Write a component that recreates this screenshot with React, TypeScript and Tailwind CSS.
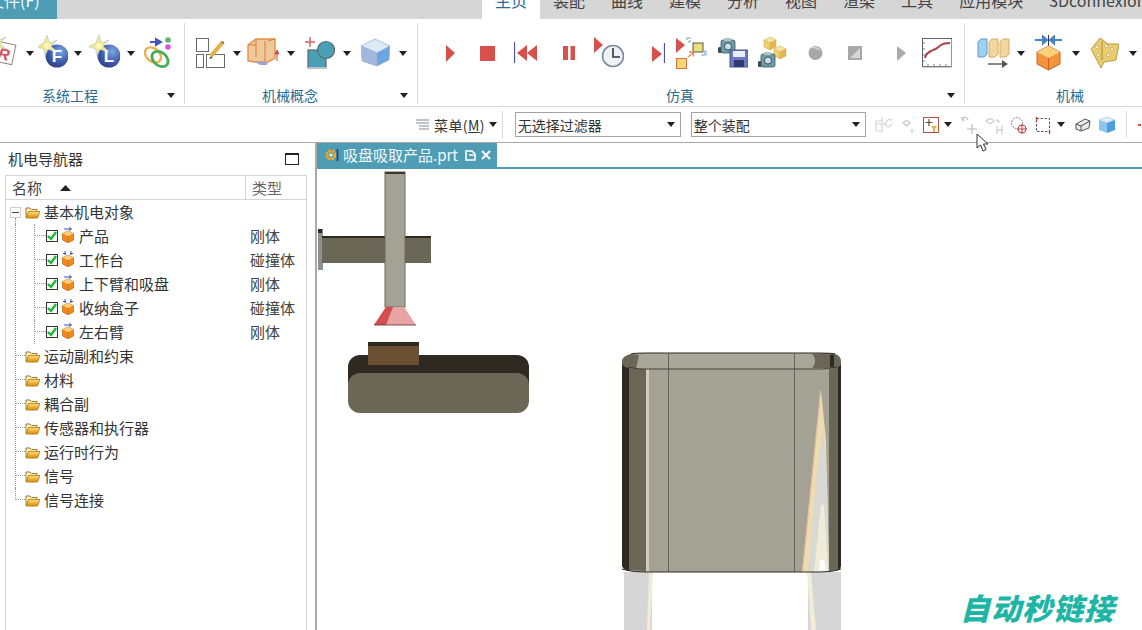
import React from 'react';

const FONT = "font-['Noto_Sans_CJK_SC','Noto_Sans',sans-serif]";

const Ico: React.FC<{ w: number; h?: number; className?: string; children: React.ReactNode }> = ({ w, h = 36, className = '', children }) => (
  <svg width={w} height={h} viewBox={`0 0 ${w} ${h}`} className={`shrink-0 ${className}`}>
    {children}
  </svg>
);

const Caret: React.FC<{ className?: string }> = ({ className = '' }) => (
  <svg width={8} height={5} viewBox="0 0 8 5" className={`shrink-0 ${className}`}>
    <path d="M0 0h8L4 5z" fill="#222" />
  </svg>
);

const Sun = ({ x, y }: { x: number; y: number }) => (
  <g transform={`translate(${x} ${y})`}>
    <path d="M0-11 2.500-3 10-6 4 0 10 6 1 3.500-2 10-3.500 2.500-12 1-3.500-2.500z" fill="#f3e78a" stroke="#9fc7e6" strokeWidth="0.6" />
    <circle r="3" fill="#fff6b0" />
  </g>
);

const Globe = ({ id, letter, cx }: { id: string; letter: string; cx: number }) => (
  <>
    <defs>
      <radialGradient id={id} cx="0.65" cy="0.3" r="0.8">
        <stop offset="0" stopColor="#7aa7e4" />
        <stop offset="0.6" stopColor="#4058a8" />
        <stop offset="1" stopColor="#2f3c86" />
      </radialGradient>
    </defs>
    <circle cx={cx} cy="21" r="11.5" fill={`url(#${id})`} />
    <Sun x={cx - 10} y={11} />
    <text x={cx} y="27" textAnchor="middle" fontSize="17" fontWeight="700" fill="#fff" fontFamily="'Liberation Sans',sans-serif">
      {letter}
    </text>
  </>
);

const Camera = ({ x, y }: { x: number; y: number }) => (
  <g transform={`translate(${x} ${y})`}>
    <rect x="0" y="9" width="4" height="6" rx="1.5" fill="#3c4a4a" />
    <rect x="3" y="2" width="14" height="13" rx="2" fill="#6f9aa6" stroke="#40585f" strokeWidth="0.8" />
    <rect x="6" y="0" width="7" height="3" fill="#a9c4cc" />
    <circle cx="10" cy="8.5" r="3.6" fill="#c9dde4" stroke="#34505a" strokeWidth="1" />
  </g>
);

const MiniCube = ({ x, y, s = 1 }: { x: number; y: number; s?: number }) => (
  <g transform={`translate(${x} ${y}) scale(${s})`}>
    <path d="M0 3 6 0l6 3-6 3z" fill="#f7e3a0" stroke="#d9b456" strokeWidth="0.6" />
    <path d="M0 3l6 3v7l-6-3z" fill="#efcf72" stroke="#d9b456" strokeWidth="0.6" />
    <path d="M12 3 6 6v7l6-3z" fill="#e2b74f" stroke="#d9b456" strokeWidth="0.6" />
  </g>
);

const Folder = () => (
  <svg width={15} height={13} viewBox="0 0 15 13" className="shrink-0">
    <defs>
      <linearGradient id="fold" x1="0" y1="0" x2="0" y2="1">
        <stop offset="0" stopColor="#ffe27a" />
        <stop offset="1" stopColor="#e08a00" />
      </linearGradient>
    </defs>
    <path d="M1 11V2h4l1.500 1.500H12V5" fill="#fdf3cf" stroke="#a9741c" strokeWidth="1" />
    <path d="M1 12 3.500 5.500H15L12.500 12z" fill="url(#fold)" stroke="#a9741c" strokeWidth="0.8" />
  </svg>
);

const Check = () => (
  <svg width={12} height={12} viewBox="0 0 12 12" className="shrink-0">
    <rect x="0.500" y="0.500" width="11" height="11" fill="#fff" stroke="#2c3a2c" />
    <path d="M2 6l3 3 5-7" fill="none" stroke="#1fb53c" strokeWidth="2.400" />
  </svg>
);

const BodyCube = ({ fixed }: { fixed?: boolean }) => (
  <svg width={12} height={16} viewBox="0 0 12 16" className="shrink-0">
    {fixed ? (
      <path d="M3 0v4M9 0v4M1 2.500h3M8 2.500h3" stroke="#3d55b5" strokeWidth="1" />
    ) : (
      <path d="M2 2h7M7 0.500 9.500 2 7 3.500" stroke="#3d55b5" strokeWidth="1" fill="none" />
    )}
    <path d="M6 4l5.500 2.500v6.500L6 16 .5 13V6.500z" fill="#f08a1c" stroke="#b9540f" strokeWidth="0.6" />
    <path d="M6 4l5.500 2.500L6 9 .5 6.500z" fill="#fbd27a" />
    <path d="M6 9v7" stroke="#c8680f" strokeWidth="0.6" />
  </svg>
);

const children = [
  { name: '产品', type: '刚体', fixed: false },
  { name: '工作台', type: '碰撞体', fixed: true },
  { name: '上下臂和吸盘', type: '刚体', fixed: false },
  { name: '收纳盒子', type: '碰撞体', fixed: true },
  { name: '左右臂', type: '刚体', fixed: false },
];
const roots = ['运动副和约束', '材料', '耦合副', '传感器和执行器', '运行时行为', '信号'];
const tabs = ['装配', '曲线', '建模', '分析', '视图', '渲染', '工具', '应用模块'];

const GroupLabel: React.FC<{ label: string; arrow?: boolean }> = ({ label, arrow = true }) => (
  <div className="flex items-center h-[16px] mt-[16px]">
    <div className="flex-1 text-center text-[14px] leading-[16px] text-[#2a6c93]">{label}</div>
    {arrow && (
      <div className="w-[22px] pl-[5px] flex items-center">
        <Caret />
      </div>
    )}
  </div>
);

const Ribbon = () => (
  <div className="flex h-[88px] border-b border-[#d9d9d9] bg-white pt-[4px] overflow-hidden">
    {/* 系统工程 */}
    <div className="shrink-0 w-[207px] -ml-[22px] h-[81px] border-r border-[#dcdcdc] pt-[12px]">
      <div className="flex items-center h-[36px]">
        <Ico w={26} className="ml-[14px]">
          <g transform="rotate(12 13 18)">
            <rect x="2" y="8" width="20" height="20" fill="#fff" stroke="#8a8a7a" />
            <text x="12" y="25" textAnchor="middle" fontSize="16" fontStyle="italic" fontWeight="700" fill="#d8505a" fontFamily="'Liberation Sans',sans-serif">R</text>
          </g>
          <Sun x={4} y={8} />
        </Ico>
        <Caret className="ml-[8px]" />
        <Ico w={30} className="ml-[4px]"><Globe id="gf" letter="F" cx={19} /></Ico>
        <Caret className="ml-[6px]" />
        <Ico w={31} className="ml-[7px]"><Globe id="gl" letter="L" cx={20} /></Ico>
        <Caret className="ml-[7px]" />
        <Ico w={30} className="ml-[7px]">
          <path d="M8 7h9M14 4l5 3-5 3z" fill="#4a55c4" stroke="#4a55c4" strokeWidth="2" />
          <circle cx="26" cy="5" r="2.800" fill="#5fb56a" />
          <circle cx="26" cy="12" r="2.800" fill="#dc50dc" />
          <ellipse cx="11" cy="20" rx="9" ry="6.500" transform="rotate(40 11 20)" fill="none" stroke="#eeb04c" strokeWidth="2.400" />
          <ellipse cx="18" cy="24" rx="9" ry="6.500" transform="rotate(40 18 24)" fill="none" stroke="#45ad5a" strokeWidth="2.800" />
        </Ico>
      </div>
      <GroupLabel label="系统工程" />
    </div>

    {/* 机械概念 */}
    <div className="shrink-0 w-[233px] h-[81px] border-r border-[#dcdcdc] pt-[12px]">
      <div className="flex items-center h-[36px]">
        <Ico w={29} className="ml-[11px]">
          <g fill="#fff" stroke="#6a6a6a" strokeWidth="1">
            <rect x="0.500" y="3.500" width="12" height="13" />
            <rect x="0.500" y="19.500" width="7" height="13" />
            <rect x="10.500" y="19.500" width="18" height="13" />
          </g>
          <path d="M26 8 15 21" stroke="#e5b040" strokeWidth="4" />
          <path d="M26 8l-1.500-1.500 3 0 1 3z" fill="#8a5a3a" />
          <path d="M15 21l-2 3 3.500-1z" fill="#444" />
        </Ico>
        <Caret className="ml-[8px]" />
        <Ico w={32} className="ml-[6px]">
          <path d="M1 10 9 4h19v19l-7 4H8L1 26z" fill="#ecc99a" stroke="#e88f45" strokeWidth="1.400" />
          <path d="M9 4v18M18 6v20M1 10l8 0M21 6l7-2" stroke="#e07b3c" strokeWidth="1" fill="none" />
          <path d="M8 27l5 3h7l1-3z" fill="#9aa6dc" />
          <path d="M30 26v-8M28 19l2-4 2 4z" stroke="#d9464a" fill="#d9464a" strokeWidth="1" />
        </Ico>
        <Caret className="ml-[8px]" />
        <Ico w={30} className="ml-[10px]">
          <path d="M0 7h10M5 2v10" stroke="#d9606a" strokeWidth="1.400" />
          <rect x="3" y="15" width="18" height="18" fill="#4a9fb6" stroke="#5a6a6a" strokeWidth="1.200" />
          <circle cx="21" cy="15" r="8.500" fill="#4a9fb6" stroke="#5a6a6a" strokeWidth="1.200" />
          <path d="M3 33h19" stroke="#b8c4c4" strokeWidth="2" />
        </Ico>
        <Caret className="ml-[8px]" />
        <Ico w={29} className="ml-[10px]">
          <path d="M0 11 14 4l15 7-13 7z" fill="#dcebf8" stroke="#9ab4d8" strokeWidth="0.800" />
          <path d="M0 11l16 7v13L1 26z" fill="#a3b7dc" stroke="#9ab4d8" strokeWidth="0.800" />
          <path d="M29 11 16 18v13l12-6z" fill="#6ea4e0" stroke="#9ab4d8" strokeWidth="0.800" />
        </Ico>
        <Caret className="ml-[9px]" />
      </div>
      <GroupLabel label="机械概念" />
    </div>

    {/* 仿真 */}
    <div className="shrink-0 w-[547px] h-[81px] border-r border-[#dcdcdc] pt-[12px]">
      <div className="flex items-center h-[36px]">
        <Ico w={9} className="ml-[28px]"><path d="M0 10l9 8-9 9z" fill="#d8504c" /></Ico>
        <Ico w={15} className="ml-[25px]"><rect y="11" width="15" height="15" fill="#d8504c" /></Ico>
        <Ico w={23} className="ml-[19px]">
          <path d="M.5 7v21" stroke="#4a55a8" strokeWidth="1.200" />
          <path d="M13 10v16L3 18zM23 10v16L13 18z" fill="#d8504c" />
        </Ico>
        <Ico w={12} className="ml-[26px]">
          <rect y="11" width="5" height="14" fill="#d8504c" />
          <rect x="7.500" y="11" width="4.500" height="14" fill="#d8504c" />
        </Ico>
        <Ico w={30} className="ml-[19px]">
          <path d="M0 2l9 8-9 8z" fill="#d8504c" />
          <circle cx="19" cy="21" r="10.500" fill="#eef2f6" stroke="#7a8aa6" strokeWidth="1.600" />
          <path d="M19 13v9h7" fill="none" stroke="#333" strokeWidth="1.600" />
        </Ico>
        <Ico w={13} className="ml-[28px]">
          <path d="M0 11l10 8-10 8z" fill="#d8504c" />
          <path d="M12.500 8v20" stroke="#4a55a8" strokeWidth="1.200" />
        </Ico>
        <Ico w={31} className="ml-[11px]">
          <path d="M0 3l9 7-9 8z" fill="#d8504c" />
          <rect x="17" y="8" width="10" height="9" fill="#ecdf7a" stroke="#555" />
          <path d="M11 5V3h4M29 15v5h-4M13 8V6h2M31 16v5" fill="none" stroke="#7a9ac4" strokeWidth="1" />
          <rect x="0.500" y="23.500" width="10" height="10" fill="#f2d66e" stroke="#d9704c" />
          <path d="M12 22l5-4M13 17h4.500v4.500" fill="none" stroke="#e8885a" strokeWidth="1.400" />
        </Ico>
        <Ico w={30} className="ml-[11px]">
          <Camera x={0} y={3} />
          <rect x="12" y="15" width="18" height="17" fill="#6b78c4" stroke="#4a5590" />
          <rect x="15" y="16" width="12" height="6" fill="#e8eef6" />
          <rect x="16" y="25" width="10" height="7" fill="#303a70" />
        </Ico>
        <Ico w={30} className="ml-[10px]">
          <MiniCube x={6} y={2} />
          <MiniCube x={16} y={11} />
          <Camera x={0} y={17} />
        </Ico>
        <Ico w={15} className="ml-[20px]">
          <circle cx="7.500" cy="18" r="7" fill="#a8a8a8" />
          <path d="M3 13c3-2 8-1 10 3-3-2-6-3-10-3z" fill="#e0e0e0" />
        </Ico>
        <Ico w={14} className="ml-[25px]">
          <rect y="11" width="14" height="14" fill="#a8a8a8" />
          <path d="M2 23 12 13v10z" fill="#d6d6d6" />
        </Ico>
        <Ico w={9} className="ml-[35px]"><path d="M0 11l9 7-9 8z" fill="#aaa" /></Ico>
        <Ico w={30} className="ml-[16px]">
          <rect x="0.500" y="3.500" width="29" height="28" fill="#fff" stroke="#5a6070" />
          <path d="M29.500 4v28H1" fill="none" stroke="#9a9a9a" strokeWidth="1.200" />
          <path d="M3 23c1-6 5-6 8-8 4-1 5-3 8-5 3-2 5-2 9-2" fill="none" stroke="#a8404a" strokeWidth="2" />
          <path d="M1 8h2M1 14h2M1 20h2M1 26h2M6 31v-2M12 31v-2M18 31v-2M24 31v-2" stroke="#666" strokeWidth="0.800" />
        </Ico>
      </div>
      <GroupLabel label="仿真" />
    </div>

    {/* 机械 */}
    <div className="shrink-0 w-[210px] h-[81px] pt-[12px]">
      <div className="flex items-center h-[36px]">
        <Ico w={33} className="ml-[12px]">
          <g strokeWidth="1">
            <path d="M1 7l3-3h6v15l-3 3H1z" fill="#9fd0ee" stroke="#5a9ad8" />
            <path d="M12 7l3-3h6v15l-3 3h-6z" fill="#f2d6a0" stroke="#dfa860" />
            <path d="M23 7l3-3h6v15l-3 3h-6z" fill="#f2d6a0" stroke="#dfa860" />
          </g>
          <path d="M11 29h18" stroke="#555" strokeWidth="1.400" />
          <path d="M25 25l6 4-6 4z" fill="#555" />
        </Ico>
        <Caret className="ml-[7px]" />
        <Ico w={27} className="ml-[10px]">
          <path d="M0 5h8M8 1.500 12 5l-4 3.500zM27 5h-8M19 1.500 15 5l4 3.500z" fill="#4a80cc" stroke="#4a80cc" strokeWidth="2" />
          <path d="M13.500 0v11" stroke="#333" strokeWidth="1" />
          <path d="M13.500 11 25 17v12l-11.500 6L2 29V17z" fill="#f3943a" stroke="#c8642a" />
          <path d="M13.500 11 25 17l-11.500 6L2 17z" fill="#fbd27a" />
          <path d="M13.500 23v12" stroke="#c8642a" />
        </Ico>
        <Caret className="ml-[10px]" />
        <Ico w={28} className="ml-[11px]">
          <path d="M0 14 9 3l8 6 11 0-3 16-12 2-3 6z" fill="#e8cc6e" stroke="#b89a4a" />
          <path d="M11 6v19" stroke="#a88a3a" />
          <g fill="#fff" stroke="#a88a3a" strokeWidth="0.500">
            <circle cx="6" cy="12" r="1.500" /><circle cx="7" cy="20" r="1.500" />
            <circle cx="15" cy="11" r="1.500" /><circle cx="21" cy="14" r="1.500" />
            <circle cx="17" cy="20" r="1.500" />
          </g>
        </Ico>
        <Caret className="ml-[10px]" />
      </div>
      <GroupLabel label="机械" arrow={false} />
    </div>
  </div>
);

const Toolbar = () => (
  <div className="flex items-center h-[36px] border-b border-[#a9a9a9] bg-white text-[14px] text-[#333] overflow-hidden">
    <Ico w={15} h={14} className="ml-[415px]">
      <path d="M1 2h13M1 5h13M4 8h10M4 11h10" stroke="#7a8a9a" strokeWidth="1.200" />
    </Ico>
    <span className="ml-[4px] leading-[20px] tracking-[0.4px] whitespace-nowrap">
      菜单(<span className="underline">M</span>)
    </span>
    <Caret className="ml-[4px]" />
    <div className="ml-[5px] w-px h-[27px] bg-[#dcdcdc] shrink-0" />
    <div className="ml-[12px] shrink-0 w-[166px] h-[25px] border border-[#a3a3a3] flex items-center justify-between pl-[2px] pr-[5px]">
      <span className="leading-[20px]">无选择过滤器</span>
      <Caret />
    </div>
    <div className="ml-[10px] shrink-0 w-[175px] h-[25px] border border-[#a3a3a3] flex items-center justify-between pl-[2px] pr-[5px]">
      <span className="leading-[20px]">整个装配</span>
      <Caret />
    </div>
    <Ico w={18} h={20} className="ml-[8px]">
      <path d="M8 2v16M1 9h12M2 6h6v10H2zM13 6a3 3 0 1 0 4 4 3 3 0 1 0-4-4z" fill="none" stroke="#d6d6d6" strokeWidth="1.200" />
    </Ico>
    <Ico w={12} h={20} className="ml-[10px]">
      <path d="M1 8c2-3 5-3 7 0l-3 3zM10 14v4" fill="none" stroke="#d0d0d0" strokeWidth="1.600" />
    </Ico>
    <Ico w={17} h={20} className="ml-[9px]">
      <rect x="0.500" y="2.500" width="15" height="15" fill="#fff" stroke="#b8503c" />
      <path d="M6 4v7M2.500 7.500h7" stroke="#6a4a3a" strokeWidth="1.200" />
      <path d="M8 11h6l-2 3v3h-2v-3z" fill="#e8b04a" />
    </Ico>
    <Caret className="ml-[4px]" />
    <Ico w={16} h={20} className="ml-[9px]">
      <path d="M1 4c2-3 5-2 6 1M1 2v3h3M11 9v10M6 14h10" fill="none" stroke="#b8b8b8" strokeWidth="1.100" />
    </Ico>
    <Ico w={18} h={20} className="ml-[8px]">
      <path d="M1 6c3-3 6-3 8 0l-4 3zM11 5c2 0 3 1 3 3M12 11v8M17 11v8M12 15h5" fill="none" stroke="#d0d0d0" strokeWidth="1.300" />
    </Ico>
    <Ico w={16} h={20} className="ml-[8px]">
      <circle cx="6" cy="8" r="5.500" fill="none" stroke="#666" strokeDasharray="1.500 1.500" />
      <circle cx="11" cy="14" r="4" fill="#fff" stroke="#b8403c" />
      <path d="M11 9v10M6 14h10" stroke="#b8403c" />
    </Ico>
    <Ico w={16} h={20} className="ml-[8px]">
      <rect x="1.500" y="3.500" width="13" height="13" fill="none" stroke="#555" strokeDasharray="2.500 1.500" />
      <path d="M1.500 2v4M14.500 15v4" stroke="#c8403c" strokeWidth="1.400" />
    </Ico>
    <Caret className="ml-[6px]" />
    <Ico w={16} h={20} className="ml-[10px]">
      <path d="M1 9l9-5 5 2-1 7-8 3-5-2z" fill="#e8e8e8" stroke="#555" />
      <path d="M1 9l5 2v5M6 11l9-5" fill="none" stroke="#555" />
    </Ico>
    <Ico w={16} h={20} className="ml-[8px]">
      <path d="M0 5l8-3 8 3-8 3z" fill="#dff0fa" stroke="#8ab4d8" strokeWidth="0.500" />
      <path d="M0 5l8 3v10l-8-3z" fill="#8fc6ee" />
      <path d="M16 5 8 8v10l8-3z" fill="#4f9fdc" />
    </Ico>
    <div className="ml-[11px] w-px h-[27px] bg-[#dcdcdc] shrink-0" />
    <div className="ml-[11px] w-[3px] h-[2px] bg-[#d8504c] shrink-0" />
  </div>
);

const Navigator = () => (
  <div className="shrink-0 w-[317px] h-full border-r-2 border-[#a9a9a9] bg-white text-[15px] leading-[20px] text-[#333] flex flex-col">
    <div className="flex items-center justify-between h-[32px] pl-[8px] pr-[16px]">
      <span>机电导航器</span>
      <div className="w-[14px] h-[12px] border border-[#222] border-t-2" />
    </div>
    <div className="ml-[5px] w-[302px] flex-1 border border-b-0 border-[#d4d4d4]">
      <div className="flex h-[24px] border-b border-[#d4d4d4]">
        <div className="w-[240px] border-r border-[#d4d4d4] pl-[6px] flex items-center">
          <span className="text-[#444]">名称</span>
          <svg width={11} height={6} viewBox="0 0 11 6" className="ml-[18px]"><path d="M0 6 5.500 0 11 6z" fill="#222" /></svg>
        </div>
        <div className="pl-[6px] flex items-center text-[#666]">类型</div>
      </div>

      {/* tree */}
      <div className="flex h-[24px]">
        <div className="ml-[4px] w-[11px] flex flex-col pt-[7px]">
          <div className="w-[11px] h-[11px] border border-[#cfcfcf] flex items-center justify-center shrink-0">
            <div className="w-[7px] h-px bg-[#444]" />
          </div>
          <div className="ml-[5px] flex-1 border-l border-dotted border-[#999]" />
        </div>
        <div className="ml-[4px] flex items-center gap-[4px]">
          <Folder />
          <span>基本机电对象</span>
        </div>
      </div>
      <div className="ml-[9px] border-l border-dotted border-[#999]">
        <div className="ml-[18px] border-l border-dotted border-[#999] w-[270px]">
          {children.map((c, i) => (
            <div key={c.name} className="flex items-center h-[24px]">
              <div className={i === children.length - 1 ? 'relative -ml-px w-[12px] h-[12px] self-start bg-white border-l border-b border-dotted border-[#999]' : 'w-[11px] h-[12px] self-start border-b border-dotted border-[#999]'} />
              <Check />
              <div className="ml-[4px] -mt-[3px]"><BodyCube fixed={c.fixed} /></div>
              <span className="ml-[5px] w-[171px]">{c.name}</span>
              <span className="text-[#444]">{c.type}</span>
            </div>
          ))}
        </div>
        {roots.map(r => (
          <div key={r} className="flex items-center h-[24px]">
            <div className="w-[9px] h-[12px] self-start border-b border-dotted border-[#999]" />
            <Folder />
            <span className="ml-[4px]">{r}</span>
          </div>
        ))}
      </div>
      <div className="ml-[9px] flex items-center h-[24px]">
        <div className="w-[10px] h-[12px] self-start border-l border-b border-dotted border-[#999]" />
        <Folder />
        <span className="ml-[4px]">信号连接</span>
      </div>
    </div>
  </div>
);

const Scene = () => (
  <svg width={825} height={461} viewBox="317 169 825 461" className="block">
    {/* gripper */}
    <rect x="318" y="229" width="5" height="41" fill="#8b9290" />
    <rect x="318" y="229" width="4" height="4" fill="#2e2a22" />
    <rect x="322" y="236" width="109" height="27" fill="#6b6757" />
    <rect x="322" y="236" width="109" height="2" fill="#2e2a22" />
    <rect x="385" y="172" width="20" height="135" fill="#a3a294" stroke="#6b6b5c" />
    <rect x="385" y="172" width="20" height="2" fill="#3a382f" />
    <path d="M386 307h18l12 18h-42z" fill="#e8a3a3" />
    <path d="M386 307h7l-7 18h-12z" fill="#d34e50" />
    <path d="M374 325h42" stroke="#5a3030" strokeWidth="0.800" />
    {/* table */}
    <rect x="348" y="355" width="181" height="40" rx="12" fill="#2e2a22" />
    <rect x="348" y="373" width="181" height="40" rx="12" fill="#6b6757" />
    <rect x="368" y="342" width="51" height="23" fill="#6b4f33" />
    <rect x="368" y="342" width="51" height="4" fill="#2e2a22" />
    {/* box lower */}
    <rect x="624" y="572" width="28" height="58" fill="#d6d6d6" />
    <path d="M649 572h4l-3 58h-3z" fill="#f1ecd8" />
    <rect x="808" y="572" width="33" height="58" fill="#d6d6d6" />
    <path d="M807 572h4l5 58h-5z" fill="#f1ecd8" />
    {/* box body */}
    <path d="M622 362c0-7 8-9 24-9h172c16 0 23 2 23 9v203c0 4-8 7-22 7H644c-14 0-22-3-22-7z" fill="#a3a294" />
    <path d="M622 362v203c0 3 3 5 8 6V366c-5-1-8-2-8-4z" fill="#2e2a22" />
    <path d="M629 366l17 3v202l-17-1z" fill="#6b6757" />
    <path d="M646 369h3v203h-3z" fill="#cfcdbc" />
    <path d="M841 362v203c0 3-1 4-3 5V366z" fill="#2e2a22" />
    <path d="M829 369l9-3v204l-9 1z" fill="#6b6757" />
    <path d="M821 390l5 50 3 132h-27z" fill="#ecdcae" />
    <path d="M821 390h-1l-18 182h1z" fill="#e7b6a2" />
    <path d="M823 425l4 55 2 92h-21l8-92z" fill="#d8d8d4" />
    <path d="M821 505h3l4 67h-14z" fill="#f1ecd8" />
    <path d="M820 560h4l2 12h-7z" fill="#fff" />
    {/* box rim */}
    <path d="M622 362c0-5 4-7 10-8 5-1 10-1 14-1h172c5 0 11 0 15 1 5 1 8 3 8 8 0 3-2 5-5 6-6 1-12 1-18 1H646c-10 0-24 0-24-7z" fill="#a8a799" />
    <path d="M622 362c0-4 3-6 9-8l8 1-3 14c-10-1-14-3-14-7z" fill="#6b6757" />
    <path d="M812 354l20-1c6 1 9 4 9 9 0 3-2 5-5 6h-24c4-4 4-10 0-14z" fill="#6b6757" />
    <path d="M830 355h4v12h-4z" fill="#2e2a22" />
    <path d="M631 354c4-1 10-1 15-1h172c7 0 13 0 17 1" fill="none" stroke="#2e2a22" strokeWidth="1.200" />
    <path d="M628 367c8 2 14 2 20 2h170c8 0 14-1 19-2" fill="none" stroke="#2e2a22" strokeWidth="0.800" />
    <path d="M622 569c6 2 14 3 24 3h172c10 0 18-1 23-3" fill="none" stroke="#2e2a22" strokeWidth="1.200" />
    <path d="M668.500 353v219M794.500 353v219" stroke="#55534a" strokeWidth="0.800" />
  </svg>
);

const Viewport = () => (
  <div className="relative flex-1 min-w-0 h-full bg-white overflow-hidden">
    <div className="flex h-[26px] border-b-2 border-[#4f9cb5]">
      <div className="w-[180px] h-[24px] bg-[#4f9cb5] flex items-center pl-[8px] text-[15px] leading-[20px] text-[#f2fbff]">
        <svg width={14} height={16} viewBox="0 0 14 16" className="shrink-0">
          <circle cx="6" cy="8" r="4" fill="none" stroke="#f0a92e" strokeWidth="3" strokeDasharray="2.400 0.800" />
          <circle cx="6" cy="8" r="1.600" fill="#fff6d0" />
          <path d="M12.500 2v12" stroke="#1f3f9a" strokeWidth="1.800" />
        </svg>
        <span className="ml-[4px] whitespace-nowrap">吸盘吸取产品.prt</span>
        <svg width={11} height={11} viewBox="0 0 11 11" className="ml-[7px] shrink-0">
          <path d="M1 1h6l3 3v6H1z" fill="none" stroke="#fff" strokeWidth="1.600" />
          <path d="M4 5h5" stroke="#fff" strokeWidth="1.500" />
        </svg>
        <svg width={10} height={10} viewBox="0 0 10 10" className="ml-[5px] shrink-0">
          <path d="M1 1l8 8M9 1 1 9" stroke="#fff" strokeWidth="2" />
        </svg>
      </div>
    </div>
    <Scene />
    <div className={`absolute left-[643px] top-[445px] text-[30px] leading-[38px] tracking-[1px] font-black italic text-[#1db5a5] whitespace-nowrap ${FONT}`}>
      自动秒链接
    </div>
  </div>
);

export default function App() {
  return (
    <div className={`relative w-[1142px] h-[630px] overflow-hidden bg-white ${FONT}`}>
      <div className="flex h-[19px] bg-[#d6d6d6] text-[16px] leading-[20px] text-[#444] overflow-hidden">
        <div className="shrink-0 w-[57px] bg-[#4f9cb5] text-[#f2fbff] overflow-hidden">
          <div className="-ml-[12px] -mt-[10px] whitespace-nowrap">文件(F)</div>
        </div>
        <div className="shrink-0 ml-[425px] px-[13px] bg-white text-[#2a6c93]">
          <div className="-mt-[10px]">主页</div>
        </div>
        {tabs.map(t => (
          <div key={t} className="shrink-0 px-[13px]">
            <div className="-mt-[10px] whitespace-nowrap">{t}</div>
          </div>
        ))}
        <div className="shrink-0 px-[13px]">
          <div className="-mt-[10px] whitespace-nowrap">3Dconnexion</div>
        </div>
      </div>
      <Ribbon />
      <Toolbar />
      <div className="flex h-[487px]">
        <Navigator />
        <Viewport />
      </div>
      {/* mouse pointer */}
      <svg width={14} height={20} viewBox="0 0 14 20" className="absolute left-[976px] top-[133px]">
        <path d="M1 1v14l3.500-3 2.500 6 3-1.500L7.500 11H12z" fill="#fff" stroke="#333" strokeWidth="1" />
      </svg>
    </div>
  );
}
